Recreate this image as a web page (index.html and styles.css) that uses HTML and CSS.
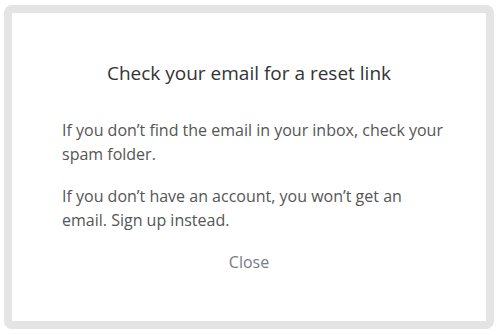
FILE: index.html
```html
<!DOCTYPE html>
<html>
<head>
<meta charset="utf-8">
<link rel="stylesheet" href="styles.css">
</head>
<body>
<div class="frame">
  <div class="dialog">
    <h1 class="title">Check your email for a reset link</h1>
    <p class="text">If you don’t find the email in your inbox, check your spam folder.</p>
    <p class="text">If you don’t have an account, you won’t get an email. Sign up instead.</p>
    <div class="actions"><span class="close">Close</span></div>
  </div>
</div>
</body>
</html>
```
FILE: styles.css
```css
html, body { margin: 0; padding: 0; background: #fff; }
body { font-family: "Open Sans", "Noto Sans", sans-serif; }
.frame {
  margin: 5px 5px 6px 4px;
  width: 490px;
  height: 324px;
  box-sizing: border-box;
  border: 8px solid #e4e4e4;
  border-radius: 8px;
  background: #fff;
}
.dialog {
  padding: 47px 0 0 0;
  display: flex;
  flex-direction: column;
}
.title {
  margin: 0 0 32px 0;
  font-size: 19px;
  font-weight: 400;
  color: #333;
  text-align: center;
  line-height: 26px;
}
.text {
  margin: 0 0 18px 50px;
  width: 386px;
  font-size: 16px;
  line-height: 24px;
  color: #555;
}
.actions { text-align: center; }
.close { font-size: 16px; line-height: 24px; color: #777c84; }
```
